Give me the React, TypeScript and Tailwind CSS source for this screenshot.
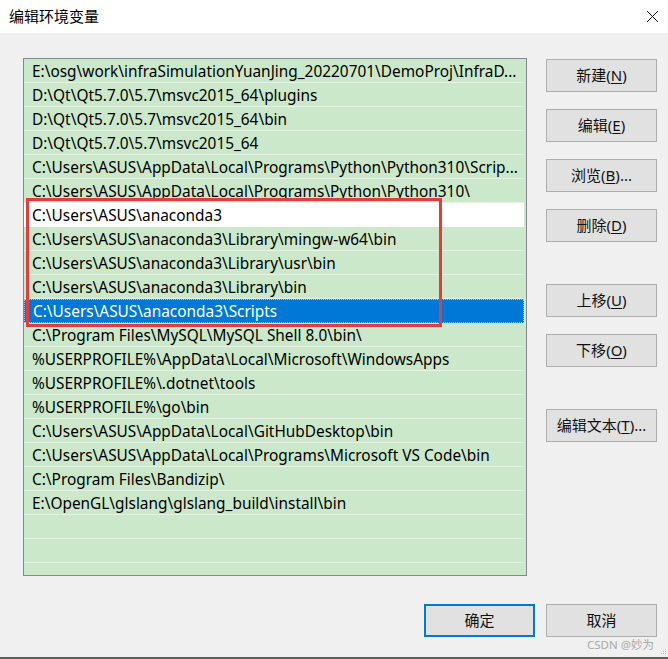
import React from "react";

const paths: string[] = [
  "E:\\osg\\work\\infraSimulationYuanJing_20220701\\DemoProj\\InfraD...",
  "D:\\Qt\\Qt5.7.0\\5.7\\msvc2015_64\\plugins",
  "D:\\Qt\\Qt5.7.0\\5.7\\msvc2015_64\\bin",
  "D:\\Qt\\Qt5.7.0\\5.7\\msvc2015_64",
  "C:\\Users\\ASUS\\AppData\\Local\\Programs\\Python\\Python310\\Scrip...",
  "C:\\Users\\ASUS\\AppData\\Local\\Programs\\Python\\Python310\\",
  "C:\\Users\\ASUS\\anaconda3",
  "C:\\Users\\ASUS\\anaconda3\\Library\\mingw-w64\\bin",
  "C:\\Users\\ASUS\\anaconda3\\Library\\usr\\bin",
  "C:\\Users\\ASUS\\anaconda3\\Library\\bin",
  "C:\\Users\\ASUS\\anaconda3\\Scripts",
  "C:\\Program Files\\MySQL\\MySQL Shell 8.0\\bin\\",
  "%USERPROFILE%\\AppData\\Local\\Microsoft\\WindowsApps",
  "%USERPROFILE%\\.dotnet\\tools",
  "%USERPROFILE%\\go\\bin",
  "C:\\Users\\ASUS\\AppData\\Local\\GitHubDesktop\\bin",
  "C:\\Users\\ASUS\\AppData\\Local\\Programs\\Microsoft VS Code\\bin",
  "C:\\Program Files\\Bandizip\\",
  "E:\\OpenGL\\glslang\\glslang_build\\install\\bin",
  "",
  "",
  "",
];

const FONT = "font-['Noto_Sans','Noto_Sans_CJK_SC',sans-serif]";

interface WinButtonProps {
  label: string;
  hotkey?: string;
  suffix?: string;
  primary?: boolean;
}

const WinButton = ({ label, hotkey, suffix, primary }: WinButtonProps) => {
  return (
    <div
      className={`flex h-[33px] w-[111px] items-center justify-center bg-[#e1e1e1] text-[15px] text-[#111] ${
        primary ? "border-2 border-[#0078d7]" : "border border-[#adadad]"
      }`}
    >
      <span>
        {label}
        {hotkey && (
          <>
            (<span className="underline underline-offset-2">{hotkey}</span>)
          </>
        )}
        {suffix}
      </span>
    </div>
  );
};

const PathRow = ({ text, index }: { text: string; index: number }) => {
  const selected = index === 10;
  const white = index === 6;
  let rowClass = "bg-[#cbe8cb] text-black border-b border-[#e4f2e4]";
  if (white) rowClass = "bg-white text-black border-b border-white";
  if (selected)
    rowClass =
      "bg-[#0078d7] text-white border border-dotted border-[#9cc8ee]";
  return (
    <div
      className={`flex h-[24px] shrink-0 items-center whitespace-nowrap pl-[8px] pt-[2px] text-[15.4px] leading-none ${rowClass}`}
    >
      {text}
    </div>
  );
};

export default function App() {
  return (
    <div
      className={`relative flex h-[659px] w-[668px] flex-col overflow-hidden border-b-2 border-[#5f5f5f] bg-[#f0f0f0] ${FONT}`}
    >
      {/* title bar */}
      <div className="flex h-[33px] shrink-0 items-center justify-between bg-white pl-[9px] pr-[8px]">
        <span className="text-[15px] text-black">编辑环境变量</span>
        <svg width="13" height="13" viewBox="0 0 13 13" className="mr-[1px]">
          <path d="M1 1 L12 12 M12 1 L1 12" stroke="#111" strokeWidth="1" />
        </svg>
      </div>

      <div className="flex pl-[23px] pt-[25px]">
        {/* path list */}
        <div className="relative h-[518px] w-[504px] overflow-hidden border border-[#828790] bg-[#cbe8cb]">
          <div className="flex flex-col pr-[2px]">
            {paths.map((p, i) => (
              <PathRow key={i} text={p} index={i} />
            ))}
          </div>
          {/* red annotation box */}
          <div className="absolute left-[2px] top-[139px] h-[129px] w-[416px] border-[3px] border-[#e63b3e]" />
        </div>

        {/* side buttons */}
        <div className="ml-[19px] flex flex-col pt-[1px]">
          <div className="flex flex-col gap-[17px]">
            <WinButton label="新建" hotkey="N" />
            <WinButton label="编辑" hotkey="E" />
            <WinButton label="浏览" hotkey="B" suffix="..." />
            <WinButton label="删除" hotkey="D" />
          </div>
          <div className="mt-[42px] flex flex-col gap-[17px]">
            <WinButton label="上移" hotkey="U" />
            <WinButton label="下移" hotkey="O" />
          </div>
          <div className="mt-[42px]">
            <WinButton label="编辑文本" hotkey="T" suffix="..." />
          </div>
        </div>
      </div>

      {/* bottom buttons */}
      <div className="mt-[28px] flex justify-end gap-[11px] pr-[11px]">
        <WinButton label="确定" primary />
        <WinButton label="取消" />
      </div>

      {/* watermark */}
      <span className="absolute bottom-[4px] right-[14px] text-[11.5px] text-[#a8a8a8]">
        CSDN @妙为
      </span>
      <svg width="6" height="6" viewBox="0 0 6 6" className="absolute bottom-[2px] right-[1px]">
        <rect x="4" y="0" width="1" height="1" fill="#b8b8b8" />
        <rect x="2" y="2" width="1" height="1" fill="#b8b8b8" />
        <rect x="4" y="2" width="1" height="1" fill="#b8b8b8" />
        <rect x="0" y="4" width="1" height="1" fill="#b8b8b8" />
        <rect x="2" y="4" width="1" height="1" fill="#b8b8b8" />
        <rect x="4" y="4" width="1" height="1" fill="#b8b8b8" />
      </svg>
    </div>
  );
}
